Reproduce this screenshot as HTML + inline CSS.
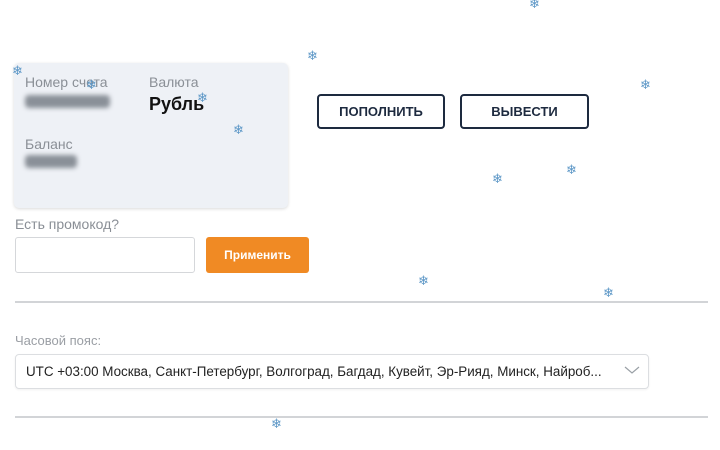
<!DOCTYPE html>
<html><head><meta charset="utf-8"><style>
body{margin:0;width:720px;height:450px;background:#fff;font-family:"Liberation Sans",sans-serif;position:relative;overflow:hidden}
.a{position:absolute}
.card{left:14px;top:63px;width:274px;height:145px;background:#eef1f6;border-radius:5px;box-shadow:0 1px 3px rgba(0,0,0,.15)}
.lbl{color:#8a8f96;font-size:14px}
.blur{background:#8a9098;filter:blur(2.5px);height:13px;border-radius:4px}
.btn{top:94px;height:31px;border:2px solid #1d2a3f;border-radius:4px;font-weight:bold;font-size:13px;color:#1d2a3f;text-align:center;line-height:31px}
.sf{position:absolute;color:#5b96c6;font-size:13px;font-family:"DejaVu Sans",sans-serif;line-height:1}
.line{left:15px;width:693px;height:2px;background:#d2d4d7}
</style></head><body>
<div class="a card"></div>
<div class="a lbl" style="left:25px;top:74px">Номер счета</div>
<div class="a blur" style="left:25px;top:95px;width:85px"></div>
<div class="a lbl" style="left:149px;top:74px">Валюта</div>
<div class="a" style="left:149px;top:94px;font-size:18px;font-weight:bold;color:#111">Рубль</div>
<div class="a lbl" style="left:25px;top:136px">Баланс</div>
<div class="a blur" style="left:25px;top:155px;width:52px"></div>
<div class="a btn" style="left:317px;width:124px">ПОПОЛНИТЬ</div>
<div class="a btn" style="left:460px;width:125px">ВЫВЕСТИ</div>
<div class="a lbl" style="left:15px;top:216px">Есть промокод?</div>
<div class="a" style="left:15px;top:237px;width:178px;height:34px;border:1px solid #d5d7da;border-radius:3px"></div>
<div class="a" style="left:206px;top:237px;width:103px;height:36px;background:#f08a24;border-radius:3px;color:#fff;font-weight:bold;font-size:12px;text-align:center;line-height:36px">Применить</div>
<div class="a line" style="top:301px"></div>
<div class="a" style="left:15px;top:333px;font-size:13px;color:#9a9ea4">Часовой пояс:</div>
<div class="a" style="left:15px;top:354px;width:632px;height:33px;border:1px solid #dcdee1;border-radius:4px;box-shadow:0 1px 2px rgba(0,0,0,.06)"></div>
<div class="a" style="left:26px;top:364px;font-size:13.4px;color:#222;white-space:nowrap">UTC +03:00 Москва, Санкт-Петербург, Волгоград, Багдад, Кувейт, Эр-Рияд, Минск, Найроб...</div>
<svg class="a" style="left:624px;top:365px" width="16" height="10"><path d="M1 2 L8 8 L15 2" fill="none" stroke="#9aa0a6" stroke-width="1.2"/></svg>
<div class="a line" style="top:416px"></div>
<span class="sf" style="left:529px;top:-2px">❄</span>
<span class="sf" style="left:307px;top:50px">❄</span>
<span class="sf" style="left:12px;top:65px">❄</span>
<span class="sf" style="left:86px;top:79px">❄</span>
<span class="sf" style="left:197px;top:92px">❄</span>
<span class="sf" style="left:233px;top:124px">❄</span>
<span class="sf" style="left:640px;top:79px">❄</span>
<span class="sf" style="left:492px;top:173px">❄</span>
<span class="sf" style="left:566px;top:164px">❄</span>
<span class="sf" style="left:418px;top:275px">❄</span>
<span class="sf" style="left:603px;top:287px">❄</span>
<span class="sf" style="left:271px;top:418px">❄</span>
</body></html>
